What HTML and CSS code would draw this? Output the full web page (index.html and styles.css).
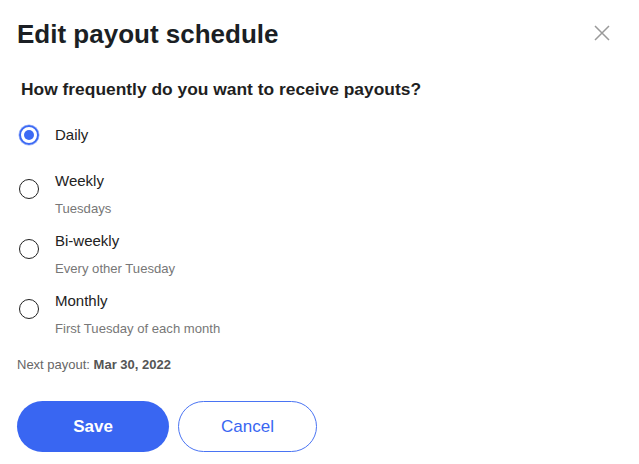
FILE: index.html
```html
<!DOCTYPE html>
<html lang="en">
<head>
  <meta charset="UTF-8" />
  <meta name="viewport" content="width=device-width, initial-scale=1.0"/>
  <title>Edit payout schedule</title>
  <link rel="stylesheet" href="styles.css">
</head>
<body>

<div class="modal">
  <div class="modal-header">
    <h2>Edit payout schedule</h2>
    <button class="close" type="button" aria-label="Close">
      <svg width="16" height="16" viewBox="0 0 16 16">
        <path d="M1 1 L15 15 M15 1 L1 15" stroke="#9a9a9a" stroke-width="1.5" fill="none"/>
      </svg>
    </button>
  </div>

  <form class="schedule-form">
    <p class="question">How frequently do you want to receive payouts?</p>

    <div class="options">
      <label class="option option-single">
        <input type="radio" name="frequency" value="daily" checked />
        <span class="radio"></span>
        <span class="option-text">
          <span class="option-label">Daily</span>
        </span>
      </label>

      <label class="option">
        <input type="radio" name="frequency" value="weekly" />
        <span class="radio"></span>
        <span class="option-text">
          <span class="option-label">Weekly</span>
          <span class="option-sub">Tuesdays</span>
        </span>
      </label>

      <label class="option">
        <input type="radio" name="frequency" value="biweekly" />
        <span class="radio"></span>
        <span class="option-text">
          <span class="option-label">Bi-weekly</span>
          <span class="option-sub">Every other Tuesday</span>
        </span>
      </label>

      <label class="option">
        <input type="radio" name="frequency" value="monthly" />
        <span class="radio"></span>
        <span class="option-text">
          <span class="option-label">Monthly</span>
          <span class="option-sub">First Tuesday of each month</span>
        </span>
      </label>
    </div>

    <p class="next-payout">Next payout: <strong>Mar 30, 2022</strong></p>

    <div class="actions">
      <button type="submit" class="btn btn-primary">Save</button>
      <button type="button" class="btn btn-outline">Cancel</button>
    </div>
  </form>
</div>

</body>
</html>
```

FILE: styles.css
```css
body {
  margin: 0;
  font-family: "Liberation Sans", Arial, sans-serif;
  background: #fff;
  color: #222;
}
.modal {
  padding: 19px 29px 0 17px;
}
.modal-header {
  display: flex;
  justify-content: space-between;
  align-items: center;
}
h2 {
  margin: 0;
  font-size: 26px;
  line-height: 30px;
  font-weight: bold;
  color: #1b1f24;
}
.close {
  background: none;
  border: none;
  padding: 0;
  width: 16px;
  height: 16px;
  margin-top: -2px;
  cursor: pointer;
}
.close svg {
  display: block;
}
.question {
  margin: 29px 0 0 4px;
  font-size: 17.4px;
  line-height: 22px;
  font-weight: bold;
  color: #1f1f1f;
}
.options {
  display: flex;
  flex-direction: column;
  gap: 13px;
  margin-top: 25px;
}
.option {
  display: flex;
  align-items: flex-start;
  gap: 16px;
  padding-left: 2px;
  cursor: pointer;
}
.option-single {
  margin-bottom: 13px;
}
.option input {
  display: none;
}
.radio {
  box-sizing: border-box;
  flex: none;
  width: 20px;
  height: 20px;
  margin-top: 8px;
  border: 1.5px solid #222;
  border-radius: 50%;
  position: relative;
}
.option-single .radio {
  margin-top: 0;
}
.option input:checked + .radio {
  border: 2px solid #3d6af4;
  box-shadow: 0 0 0 0.5px #9db4f8;
}
.option input:checked + .radio::after {
  content: "";
  position: absolute;
  top: 3px;
  left: 3px;
  width: 10px;
  height: 10px;
  border-radius: 50%;
  background: #3d6af4;
}
.option-text {
  display: flex;
  flex-direction: column;
}
.option-label {
  font-size: 15px;
  line-height: 20px;
  color: #222;
}
.option-sub {
  margin-top: 9px;
  font-size: 13.1px;
  line-height: 18px;
  color: #777;
}
.next-payout {
  margin: 18px 0 0;
  font-size: 13px;
  line-height: 18px;
  color: #666;
}
.next-payout strong {
  color: #555;
}
.actions {
  display: flex;
  gap: 9px;
  margin-top: 27px;
}
.btn {
  box-sizing: border-box;
  height: 51px;
  border-radius: 26px;
  font-family: "Liberation Sans", Arial, sans-serif;
  font-size: 17px;
  cursor: pointer;
}
.btn-primary {
  width: 152px;
  background: #3966f2;
  border: none;
  color: #fff;
  font-weight: bold;
}
.btn-outline {
  width: 139px;
  background: #fff;
  border: 1.5px solid #4a74f3;
  color: #3966f2;
}
```
